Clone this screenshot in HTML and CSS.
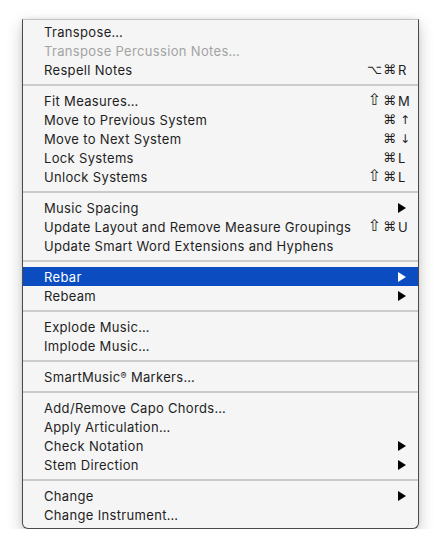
FILE: index.html
```html
<!DOCTYPE html>
<html>
<head>
<meta charset="utf-8">
<link rel="stylesheet" href="styles.css">
</head>
<body>
<div class="menu">
  <div class="item"><span class="label">Transpose…</span></div>
  <div class="item disabled"><span class="label">Transpose Percussion Notes…</span></div>
  <div class="item"><span class="label">Respell Notes</span><span class="mods">⌥⌘</span><span class="key">R</span></div>
  <div class="sep"></div>
  <div class="item"><span class="label">Fit Measures…</span><span class="mods"><span class="shift">⇧</span>⌘</span><span class="key">M</span></div>
  <div class="item"><span class="label">Move to Previous System</span><span class="mods">⌘</span><span class="key arrowkey">↑</span></div>
  <div class="item"><span class="label">Move to Next System</span><span class="mods">⌘</span><span class="key arrowkey">↓</span></div>
  <div class="item"><span class="label">Lock Systems</span><span class="mods">⌘</span><span class="key">L</span></div>
  <div class="item"><span class="label">Unlock Systems</span><span class="mods"><span class="shift">⇧</span>⌘</span><span class="key">L</span></div>
  <div class="sep"></div>
  <div class="item"><span class="label">Music Spacing</span><span class="key"><svg class="tri" viewBox="0 0 8 10"><polygon points="0,0 8,5 0,10"/></svg></span></div>
  <div class="item"><span class="label">Update Layout and Remove Measure Groupings</span><span class="mods"><span class="shift">⇧</span>⌘</span><span class="key">U</span></div>
  <div class="item"><span class="label">Update Smart Word Extensions and Hyphens</span></div>
  <div class="sep"></div>
  <div class="item active"><span class="label">Rebar</span><span class="key"><svg class="tri" viewBox="0 0 8 10"><polygon points="0,0 8,5 0,10"/></svg></span></div>
  <div class="item"><span class="label">Rebeam</span><span class="key"><svg class="tri" viewBox="0 0 8 10"><polygon points="0,0 8,5 0,10"/></svg></span></div>
  <div class="sep"></div>
  <div class="item"><span class="label">Explode Music…</span></div>
  <div class="item"><span class="label">Implode Music…</span></div>
  <div class="sep"></div>
  <div class="item"><span class="label">SmartMusic<sup class="reg">®</sup> Markers…</span></div>
  <div class="sep"></div>
  <div class="item"><span class="label">Add/Remove Capo Chords…</span></div>
  <div class="item"><span class="label">Apply Articulation…</span></div>
  <div class="item"><span class="label">Check Notation</span><span class="key"><svg class="tri" viewBox="0 0 8 10"><polygon points="0,0 8,5 0,10"/></svg></span></div>
  <div class="item"><span class="label">Stem Direction</span><span class="key"><svg class="tri" viewBox="0 0 8 10"><polygon points="0,0 8,5 0,10"/></svg></span></div>
  <div class="sep"></div>
  <div class="item"><span class="label">Change</span><span class="key"><svg class="tri" viewBox="0 0 8 10"><polygon points="0,0 8,5 0,10"/></svg></span></div>
  <div class="item"><span class="label">Change Instrument…</span></div>
</div>
</body>
</html>
```
FILE: styles.css
```css
html, body {
  margin: 0;
  padding: 0;
  background: #ffffff;
}

body {
  padding: 19px 0 0 22px;
  font-family: "Inter", "DejaVu Sans", sans-serif;
  font-size: 13px;
  letter-spacing: 0.33px;
  color: #1e1e1e;
}

.menu {
  box-sizing: border-box;
  width: 397px;
  background: #f5f5f5;
  border: 1px solid #4a4a4a;
  border-top-color: #c4c4c4;
  border-radius: 0 0 6px 6px;
  padding: 2px 0 4px;
  box-shadow: 0 6px 16px rgba(0, 0, 0, 0.22), 0 0 4px rgba(0, 0, 0, 0.08);
}

.item {
  display: flex;
  align-items: center;
  height: 19px;
  padding: 0 6px 0 21px;
  white-space: nowrap;
}

.label {
  flex: 1;
}

.disabled {
  color: #a3a3a3;
}

.active {
  background: #0b4cc1;
  color: #ffffff;
}

.mods {
  font-family: "DejaVu Sans", sans-serif;
  font-size: 13px;
  letter-spacing: 1px;
  text-align: right;
  padding-right: 1px;
}

.shift {
  font-size: 16px;
  line-height: 0;
  letter-spacing: 0;
  padding-right: 2px;
}

.key {
  width: 14px;
  display: flex;
  align-items: center;
}

.arrowkey {
  font-family: "DejaVu Sans", sans-serif;
  font-size: 12px;
  padding-left: 2px;
  box-sizing: border-box;
}

.tri {
  width: 8px;
  height: 10px;
  fill: #000000;
}

.active .tri {
  fill: #ffffff;
}

.reg {
  font-size: 9px;
  vertical-align: 3px;
  line-height: 0;
}

.sep {
  height: 2px;
  margin: 5px 0;
  background: #cbcbcb;
}
```
